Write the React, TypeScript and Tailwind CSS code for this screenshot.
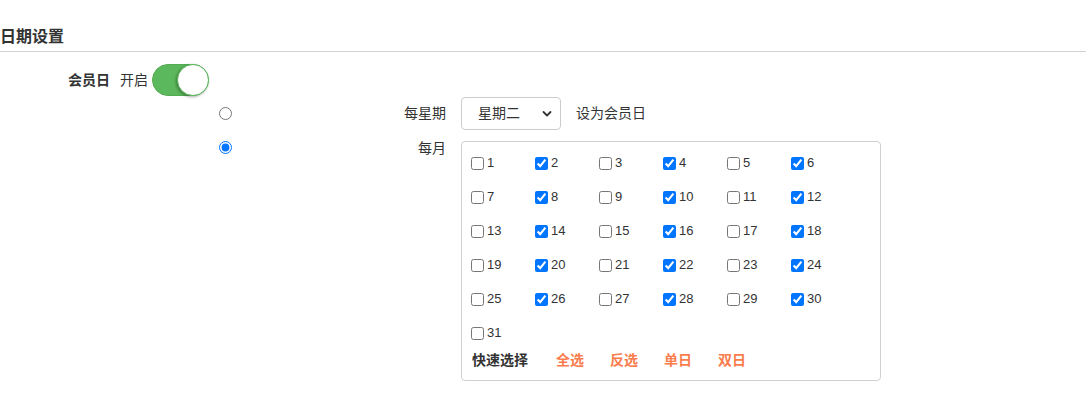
import React from "react";

const checked = new Set([2, 4, 6, 8, 10, 12, 14, 16, 18, 20, 22, 24, 26, 28, 30]);

function Check({ n }: { n: number }) {
  return (
    <label className="flex items-center h-[34px]">
      <input
        type="checkbox"
        defaultChecked={checked.has(n)}
        className="m-0 w-[13px] h-[13px] accent-[#0075ff]"
      />
      <span className="ml-[3px] text-[13px] leading-[20px] text-[#333]">{n}</span>
    </label>
  );
}

export default function App() {
  const days = Array.from({ length: 31 }, (_, i) => i + 1);
  return (
    <div
      className="w-[1086px] h-[396px] bg-white text-[#333]"
      style={{ fontFamily: '"Liberation Sans", "Noto Sans CJK SC", sans-serif' }}
    >
      <div className="pt-[25px] pb-[2px] border-b border-[#d3d3d3]">
        <h2 className="text-[16px] leading-[24px] font-bold text-[#333]">日期设置</h2>
      </div>

      {/* 会员日 toggle row */}
      <div className="flex items-center mt-[12px] h-[32px]">
        <div className="w-[110px] text-right text-[14px] font-bold leading-[20px]">会员日</div>
        <div className="ml-[10px] text-[14px] leading-[20px]">开启</div>
        <div className="ml-[4px] relative w-[57px] h-[32px] rounded-full bg-[#5cb85c] border border-[#52ad52]">
          <div className="absolute right-[-1px] top-[-1px] w-[32px] h-[32px] rounded-full bg-white border border-[#5cb85c] shadow-[-1px_1px_3px_rgba(0,0,0,0.35)]" />
        </div>
      </div>

      {/* 每星期 row */}
      <div className="flex items-center h-[34px]">
        <div className="w-[219px]" />
        <input type="radio" name="mode" className="m-0 w-[13px] h-[13px]" />
        <div className="w-[214px] text-right text-[14px] leading-[20px]">每星期</div>
        <div className="ml-[15px] relative w-[100px] h-[33px] border border-[#ccc] rounded-[4px] flex items-center">
          <span className="ml-[16px] text-[14px] leading-[20px]">星期二</span>
          <svg
            className="absolute right-[8px] top-[12px]"
            width="10"
            height="8"
            viewBox="0 0 10 8"
            fill="none"
          >
            <path d="M1.5 2 L5 5.5 L8.5 2" stroke="#333" strokeWidth="1.8" strokeLinecap="round" strokeLinejoin="round" />
          </svg>
        </div>
        <div className="ml-[15px] text-[14px] leading-[20px]">设为会员日</div>
      </div>

      {/* 每月 row */}
      <div className="flex items-start mt-[11px]">
        <div className="w-[219px]" />
        <input type="radio" name="mode" defaultChecked className="m-0 w-[13px] h-[13px]" />
        <div className="w-[214px] text-right text-[14px] leading-[14px]">每月</div>
        <div className="ml-[15px] w-[420px] h-[240px] border border-[#d0d0d0] rounded-[4px] pl-[9px] pt-[4px]">
          <div className="grid grid-cols-[repeat(6,64px)]">
            {days.map((n) => (
              <Check key={n} n={n} />
            ))}
          </div>
          <div className="flex items-center h-[20px] text-[14px] font-bold leading-[20px]">
            <span className="w-[85px] pl-[1px] text-[#333]">快速选择</span>
            <span className="w-[54px] text-[#f97c4c]">全选</span>
            <span className="w-[54px] text-[#f97c4c]">反选</span>
            <span className="w-[54px] text-[#f97c4c]">单日</span>
            <span className="w-[54px] text-[#f97c4c]">双日</span>
          </div>
        </div>
      </div>
    </div>
  );
}
